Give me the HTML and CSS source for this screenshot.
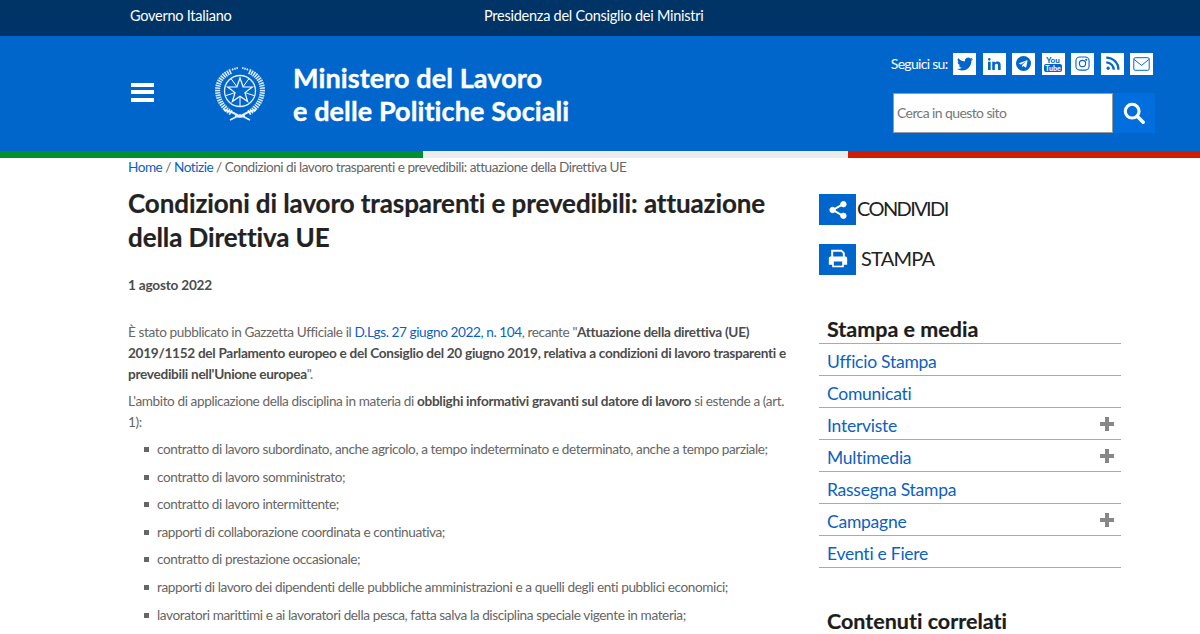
FILE: index.html
```html
<!DOCTYPE html>
<html lang="it">
<head>
<meta charset="utf-8">
<title>Condizioni di lavoro trasparenti e prevedibili</title>
<link rel="stylesheet" href="styles.css">
</head>
<body>
<div class="topbar">
  <a class="topLeft" href="#">Governo Italiano</a>
  <a href="#">Presidenza del Consiglio dei Ministri</a>
</div>
<header class="hdder">
  <div class="burger"><span></span><span></span><span></span></div>
  <svg class="emblem" viewBox="0 0 50 54" fill="none" stroke="#fff">
    <path d="M16 4.500C7 8 1.500 16 2.800 26c1 8 6 16 14 20M34 4.500c9 3.500 14.500 11.500 13.200 21.500-1 8-6 16-14 20" stroke-width="5.200" stroke-dasharray="1.600 .8" opacity=".85"/>
    <path d="M17 2.800c2-1 4-1.500 6-1.700M33 2.800c-2-1-4-1.500-6-1.700" stroke-width="2" stroke-dasharray="1.500 .8" opacity=".85"/>
    <circle cx="25" cy="24" r="15.500" stroke-width="1.300" opacity=".9"/>
    <path d="M28.060 19.790L33.820 11.860M29.950 25.610L39.270 28.640M25 29.200V39M20.050 25.610L10.730 28.640M21.940 19.790L16.180 11.860" stroke-width="1"/>
    <path d="M25 11l3.060 8.790 9.300.190-7.410 5.630 2.690 8.910L25 29.200l-7.640 5.320 2.690-8.910-7.410-5.630 9.300-.190z" fill="#0066cc" stroke-width="1.200"/>
    <path d="M9 43c6 1 11 3 16 7 5-4 10-6 16-7M15 53l10-5 10 5M20 49c3 1 7 1 10 0" stroke-width="1.800" opacity=".9"/>
  </svg>
  <h1 class="siteName">Ministero del Lavoro<br>e delle Politiche Sociali</h1>
  <div class="hdderRight">
    <div class="social">
      <span class="socialLabel">Seguici su:</span>
      <a class="socialBtn" href="#"><svg viewBox="0 0 24 24" width="16" height="16" fill="#0066cc"><path d="M23.953 4.57a10 10 0 01-2.825.775 4.958 4.958 0 002.163-2.723c-.951.555-2.005.959-3.127 1.184a4.92 4.92 0 00-8.384 4.482C7.69 8.095 4.067 6.13 1.64 3.162a4.822 4.822 0 00-.666 2.475c0 1.71.87 3.213 2.188 4.096a4.904 4.904 0 01-2.228-.616v.06a4.923 4.923 0 003.946 4.827 4.996 4.996 0 01-2.212.085 4.936 4.936 0 004.604 3.417 9.867 9.867 0 01-6.102 2.105c-.39 0-.779-.023-1.17-.067a13.995 13.995 0 007.557 2.209c9.053 0 13.998-7.496 13.998-13.985 0-.21 0-.42-.015-.63A9.935 9.935 0 0024 4.59z"/></svg></a>
      <a class="socialBtn" href="#"><svg viewBox="0 0 24 24" width="16" height="16" fill="#0066cc"><path d="M6.94 5a2 2 0 1 1-4-.002 2 2 0 0 1 4 .002zM7 8.48H3V21h4V8.48zm6.32 0H9.34V21h3.94v-6.57c0-3.66 4.77-4 4.77 0V21H22v-7.93c0-6.17-7.06-5.94-8.72-2.91l.04-1.68z"/></svg></a>
      <a class="socialBtn" href="#"><svg viewBox="0 0 24 24" width="15" height="15"><circle cx="12" cy="12" r="12" fill="#0066cc"/><path d="M5 11.7l12.6-4.9c.6-.2 1.1.2.9.9l-2.1 10c-.2.7-.6.9-1.2.5l-3.2-2.4-1.600 1.500c-.2.2-.4.3-.7.3l.2-3.2 5.800-5.300c.3-.2-.1-.3-.4-.1l-7.200 4.500-3.100-1c-.7-.2-.7-.7 0-.8z" fill="#fff"/></svg></a>
      <a class="socialBtn" href="#"><span class="yt"><span class="ytYou">You</span><span class="ytTube">Tube</span></span></a>
      <a class="socialBtn" href="#"><svg viewBox="0 0 24 24" width="15" height="15" fill="none" stroke="#0066cc" stroke-width="1.800"><rect x="1.500" y="1.500" width="21" height="21" rx="6"/><circle cx="12" cy="12" r="5"/><circle cx="18" cy="6" r=".8" fill="#0066cc"/></svg></a>
      <a class="socialBtn" href="#"><svg viewBox="0 0 24 24" width="15" height="15" fill="none" stroke="#0066cc" stroke-width="3.600"><circle cx="5" cy="19.500" r="2" fill="#0066cc" stroke-width="1.500"/><path d="M2 10c6.500 0 12 5.500 12 12M2 2.500c11 0 19.500 8.500 19.500 19.500"/></svg></a>
      <a class="socialBtn" href="#"><svg viewBox="0 0 24 20" width="17" height="14" fill="none" stroke="#0066cc" stroke-width="1.400"><rect x="1" y="1" width="22" height="18" rx="2"/><path d="M1.500 3.500L12 12l10.500-8.500"/></svg></a>
    </div>
    <form class="searchBox">
      <input class="searchInput" type="text" placeholder="Cerca in questo sito">
      <button class="searchBtn" type="button"><svg viewBox="0 0 24 24" width="22" height="22" fill="none" stroke="#fff"><circle cx="10" cy="10" r="7.500" stroke-width="3.400"/><path d="M15.500 15.500L22 22" stroke-width="3.800" stroke-linecap="round"/></svg></button>
    </form>
  </div>
</header>
<div class="flag"><span class="green"></span><span class="white"></span><span class="red"></span></div>
<nav class="crumbs"><a href="#">Home</a> / <a href="#">Notizie</a> / Condizioni di lavoro trasparenti e prevedibili: attuazione della Direttiva UE</nav>
<main class="pageGrid">
  <article class="article">
    <h2 class="title">Condizioni di lavoro trasparenti e prevedibili: attuazione della Direttiva UE</h2>
    <p class="date">1 agosto 2022</p>
    <p>È stato pubblicato in Gazzetta Ufficiale il <a href="#">D.Lgs. 27 giugno 2022, n. 104</a>, recante "<b>Attuazione della direttiva (UE) 2019/1152 del Parlamento europeo e del Consiglio del 20 giugno 2019, relativa a condizioni di lavoro trasparenti e prevedibili nell'Unione europea</b>".</p>
    <p>L'ambito di applicazione della disciplina in materia di <b>obblighi informativi gravanti sul datore di lavoro</b> si estende a (art. 1):</p>
    <ul class="bullets">
      <li>contratto di lavoro subordinato, anche agricolo, a tempo indeterminato e determinato, anche a tempo parziale;</li>
      <li>contratto di lavoro somministrato;</li>
      <li>contratto di lavoro intermittente;</li>
      <li>rapporti di collaborazione coordinata e continuativa;</li>
      <li>contratto di prestazione occasionale;</li>
      <li>rapporti di lavoro dei dipendenti delle pubbliche amministrazioni e a quelli degli enti pubblici economici;</li>
      <li>lavoratori marittimi e ai lavoratori della pesca, fatta salva la disciplina speciale vigente in materia;</li>
    </ul>
  </article>
  <aside class="side">
    <a class="action actionShare" href="#"><span class="actionIcon"><svg viewBox="0 0 24 24" width="20" height="20" fill="#fff" stroke="#fff"><path d="M18 5L6 12l12 7" fill="none" stroke-width="2.400"/><circle cx="18.500" cy="5" r="3.300"/><circle cx="5.500" cy="12" r="3.300"/><circle cx="18.500" cy="19" r="3.300"/></svg></span><span class="actionText">CONDIVIDI</span></a>
    <a class="action actionPrint" href="#"><span class="actionIcon"><svg viewBox="0 0 24 24" width="20" height="20"><path d="M5 10V2h11l3 3v5" fill="none" stroke="#fff" stroke-width="2.400"/><path d="M3 9h18a2 2 0 012 2v8h-4v3H5v-3H1v-8a2 2 0 012-2z" fill="#fff"/><rect x="7" y="15" width="10" height="5" fill="#0066cc"/></svg></span><span class="actionText">STAMPA</span></a>
    <h3 class="menuTitle menuFirst">Stampa e media</h3>
    <ul class="menu">
      <li><a href="#">Ufficio Stampa</a></li>
      <li><a href="#">Comunicati</a></li>
      <li><a href="#">Interviste</a><span class="plus"></span></li>
      <li><a href="#">Multimedia</a><span class="plus"></span></li>
      <li><a href="#">Rassegna Stampa</a></li>
      <li><a href="#">Campagne</a><span class="plus"></span></li>
      <li><a href="#">Eventi e Fiere</a></li>
    </ul>
    <h3 class="menuTitle menuNext">Contenuti correlati</h3>
  </aside>
</main>
</body>
</html>
```
FILE: styles.css
```css
html, body { height: 634px; overflow: hidden; }
body { margin: 0; font-family: "Lato", "Open Sans", sans-serif; font-variant-ligatures: none; color: #666; background: #fff; }
a { color: #0c5fc4; text-decoration: none; }

.topbar { height: 36px; background: #003366; display: flex; align-items: center; padding: 0 0 5px 130px; box-sizing: border-box; font-size: 14.5px; letter-spacing: -.25px; }
.topbar a { color: #fff; }
.topLeft { width: 354px; }

.hdder { height: 115px; background: #0066cc; display: flex; align-items: center; padding-left: 131px; box-sizing: border-box; color: #fff; }
.burger { width: 23px; display: flex; flex-direction: column; gap: 3.5px; margin: 0 61px 3px 0; }
.burger span { height: 4px; background: #fff; }
.emblem { width: 50px; height: 54px; margin-right: 28px; }
.siteName { margin: 0; font-size: 27px; line-height: 33px; font-weight: 700; color: #fff; letter-spacing: .1px; -webkit-text-stroke: .4px #fff; }
.hdderRight { margin-left: auto; margin-right: 45px; display: flex; flex-direction: column; align-items: flex-end; gap: 18px; padding-bottom: 2px; }
.social { display: flex; align-items: center; gap: 6.5px; margin-right: 2px; }
.socialLabel { font-size: 14px; letter-spacing: -.7px; margin-right: -1px; }
.socialBtn { width: 23px; height: 22px; background: #fff; display: flex; align-items: center; justify-content: center; }
.yt { display: flex; flex-direction: column; align-items: center; color: #0066cc; font-weight: 900; line-height: 8px; }
.ytYou { font-size: 8px; }
.ytTube { font-size: 7px; background: #0066cc; color: #fff; border-radius: 2px; padding: 0 1px; }
.searchBox { display: flex; height: 40px; }
.searchInput { width: 220px; box-sizing: border-box; border: 1px solid #999; padding: 0 3px; font: 14px "Lato", sans-serif; letter-spacing: -.6px; outline: 0; }
.searchInput::placeholder { color: #777; opacity: 1; }
.searchBtn { width: 42px; border: 0; background: #006fdd; padding: 0; display: flex; align-items: center; justify-content: center; }

.flag { display: flex; height: 7px; }
.green { width: 423px; background: #008f2e; }
.white { width: 425px; background: #ececec; }
.red { flex: 1; background: #d11c00; }

.crumbs { padding: 1px 0 0 128px; font-size: 13.6px; letter-spacing: -.48px; line-height: 17px; color: #666; }

.pageGrid { display: grid; grid-template-columns: 662px 302px; column-gap: 29px; padding-left: 128px; }
.title { margin: 10px 0 0; font-size: 26px; line-height: 34px; font-weight: 700; color: #222; letter-spacing: -.1px; -webkit-text-stroke: .2px #222; }
.article p { margin: 0 0 6px; font-size: 13.6px; letter-spacing: -.4px; line-height: 21px; }
.article p b { color: #4c4c4c; letter-spacing: -.28px; }
.article .date { margin: 21px 0 26px; font-weight: 700; color: #4c4c4c; letter-spacing: -.2px; }
.bullets { list-style: none; margin: 0; padding: 0 0 0 29px; font-size: 13.6px; letter-spacing: -.4px; line-height: 21px; }
.bullets li { position: relative; margin-bottom: 6.6px; }
.bullets li::before { content: ""; position: absolute; left: -13px; top: 8px; width: 5px; height: 5px; background: #666; }

.side { padding-top: 18px; }
.action { display: flex; align-items: center; height: 31px; margin-bottom: 18.5px; color: #222; font-size: 20px; letter-spacing: -.8px; }
.actionShare { letter-spacing: -1.6px; }
.actionText { margin-bottom: 3px; }
.actionIcon { width: 37px; height: 31px; background: #0066cc; display: flex; align-items: center; justify-content: center; margin-right: 1px; }
.actionPrint .actionIcon { margin-right: 5px; }
.menuTitle { margin: 0; padding-left: 8px; font-size: 21.5px; line-height: 28px; font-weight: 700; color: #1c1c1c; -webkit-text-stroke: .2px #1c1c1c; }
.menuFirst { margin-top: 40px; border-bottom: 1px solid #aaa; }
.menuNext { margin-top: 41px; line-height: 24px; }
.menu { list-style: none; margin: 0; padding: 0; }
.menu li { height: 32px; box-sizing: border-box; border-bottom: 1px solid #aaa; display: flex; align-items: center; justify-content: space-between; padding: 4px 7px 0 8px; font-size: 17.5px; letter-spacing: -.25px; }
.plus { width: 14px; height: 14px; margin-bottom: 2px; background: linear-gradient(#888,#888) center/14px 4px no-repeat, linear-gradient(#888,#888) center/4px 14px no-repeat; }
```
